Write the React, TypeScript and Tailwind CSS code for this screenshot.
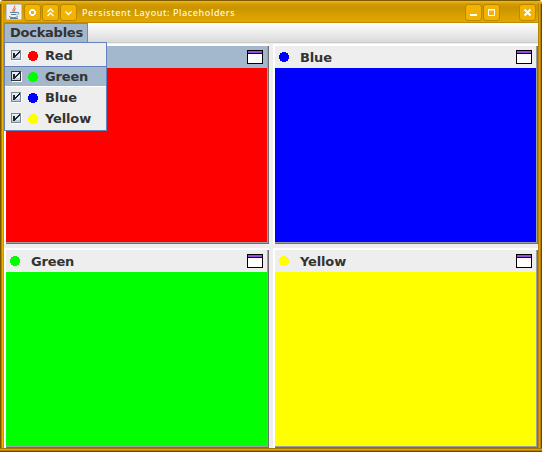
import React from 'react';

function Dot({ color }: { color: string }) {
  return (
    <svg className="block shrink-0" width="10" height="10" viewBox="0 0 10 10" shapeRendering="crispEdges">
      <path fill={color} d="M3 0h4v1h2v2h1v4h-1v2H7v1H3V9H1V7H0V3h1V1h2z" />
    </svg>
  );
}

function MaximizeIcon() {
  return (
    <svg className="block" width="16" height="14" shapeRendering="crispEdges">
      <path fill="#000" d="M0 0h16v14H0z" />
      <path fill="#a045e6" d="M1 1h14v2H1z" />
      <path fill="#fff" d="M1 4h14v9H1z" />
    </svg>
  );
}

function Check({ dark }: { dark: boolean }) {
  return (
    <svg className="block shrink-0" width="11" height="11" shapeRendering="crispEdges">
      <path fill="#fff" d="M1 1h10v10H1z" />
      <path fill={dark ? '#333333' : '#7a8a99'} d="M0 0h10v10H0z" />
      <path fill="#e4edf5" d="M1 1h8v8H1z" />
      <path fill="#b8cfe5" d="M1 7h8v2H1z" />
      <path fill="#222" d="M2 3h2v2h1v-1h1v-1h1v-1h1v-1h1v2h-1v1h-1v1h-1v1h-1v1h-1v1h-2z" />
    </svg>
  );
}

function Panel({ name, color, active = false }: { name?: string; color: string; active?: boolean }) {
  return (
    <div className="flex h-[200px] w-[265px] flex-col border-t-2 border-l-2 border-white">
      <div className="flex grow flex-col border-r border-b border-[#6f6f6f]">
        <div className="flex grow flex-col border-r border-b border-[#a0a0a0]">
          <div className={`flex h-[22px] items-center pr-[4px] pl-1 ${active ? 'bg-[#a3b8cc]' : 'bg-[#eeeeee]'}`}>
            <Dot color={color} />
            <span className="ml-[11px] grow pt-px text-[13px] leading-[22px] tracking-[-0.15px]">{name}</span>
            <MaximizeIcon />
          </div>
          <div className="grow" style={{ backgroundColor: color }} />
        </div>
      </div>
    </div>
  );
}

function TitleButton({ children }: { children: React.ReactNode }) {
  return (
    <div className="h-[17px] w-[17px] rounded-[3px] border border-[#b98700] bg-[#f2b400]">
      <svg className="block" width="15" height="15" viewBox="0 0 15 15" fill="none" stroke="#fff">
        {children}
      </svg>
    </div>
  );
}

function JavaIcon() {
  return (
    <svg className="block" width="16" height="16" viewBox="0 0 16 16" fill="none">
      <rect x=".5" y=".5" width="15" height="15" rx="1" fill="#eef0f2" stroke="#bfc8d0" />
      <path d="M8.5 1.5C10 4 5 5 7.5 8M10 4.5C8 5.5 8 6.5 9 7.5" stroke="#ee8058" strokeWidth="1.2" />
      <path d="M4 8.5h7M5 10.5h5M11 8.5c3-.5 2 2-.5 2.5M3 12.5c2 1.5 7 1.5 9 0M4 14.5h8" stroke="#55809d" />
    </svg>
  );
}

const items = [
  ['Red', '#ff0000'],
  ['Green', '#00ff00'],
  ['Blue', '#0000ff'],
  ['Yellow', '#ffff00'],
];

export default function App() {
  return (
    <div className="relative flex h-[452px] w-[542px] flex-col overflow-hidden rounded-t-[4px] bg-[#dca000] px-1 font-['DejaVu_Sans',sans-serif] font-bold text-[#333333]">
      <div className="-mx-1 flex h-[23px] shrink-0 items-start bg-[linear-gradient(#7d5900_0px,#7d5900_1px,#efb91c_1px,#d49b00_4px,#c99400_8px,#dda400_18px,#dfa500_22px,#c18a00_22px)] pt-1 pl-1.5">
        <div className="w-[18px]"><JavaIcon /></div>
        <div className="flex gap-px">
          <TitleButton>
            <path d="M6 4h3v1h1v1h1v3h-1v1H9v1H6v-1H5V9H4V6h1V5h1zM6 6v3h3V6z" fill="#fff" fillRule="evenodd" stroke="none" />
          </TitleButton>
          <TitleButton><path d="M4.5 7l3-3 3 3M4.5 11l3-3 3 3" strokeWidth="1.3" /></TitleButton>
          <TitleButton><path d="M4.5 6.5l3 3 3-3" strokeWidth="1.3" /></TitleButton>
        </div>
        <span className="ml-[5px] grow font-['Noto_Sans',sans-serif] text-[9px] leading-[17px] font-medium tracking-[0.59px] whitespace-nowrap text-[#fff8df]">
          Persistent Layout: Placeholders
        </span>
        <div className="mr-[6px] flex gap-px">
          <TitleButton><path d="M4 10h7" strokeWidth="2" /></TitleButton>
          <TitleButton><path d="M4.5 4.5h6v6h-6zM4 5h7" /></TitleButton>
          <div className="ml-[18px]"><TitleButton><path d="M4.5 4.5l6 6M10.5 4.5l-6 6" strokeWidth="2" /></TitleButton></div>
        </div>
      </div>

      <div className="flex h-[21px] shrink-0 items-start border-b border-[#eeeeee] bg-[linear-gradient(#ffffff_0px,#dadada_19px,#cccccc_19px)]">
        <div className="h-5 w-[84px] border-t border-r border-l border-t-[#7a8a99] border-r-[#7a8a99] border-l-[#7a8a99] bg-[#a3b8cc] pl-[5px] text-[13px] leading-[18px] tracking-[-0.25px]">
          Dockables
        </div>
      </div>

      <div className="grid h-[404px] shrink-0 grid-cols-[265px_265px] grid-rows-[200px_200px] gap-1 bg-[#eeeeee]">
        <Panel color="#ff0000" active />
        <Panel name="Blue" color="#0000ff" />
        <Panel name="Green" color="#00ff00" />
        <Panel name="Yellow" color="#ffff00" />
      </div>
      <div className="h-1 shrink-0" />

      <div className="absolute top-[42px] left-1 h-[89px] w-[103px] border border-[#6382bf] bg-[#eeeeee] pt-0.5">
        {items.map(([name, color]) => (
          <div
            key={name}
            className={`flex h-[21px] items-center border-t border-b pl-[6px] text-[13px] leading-[19px] tracking-[-0.15px] ${
              name === 'Green' ? 'border-t-[#6382bf] border-b-white bg-[#a3b8cc]' : 'border-transparent'
            }`}
          >
            <Check dark={name === 'Green'} />
            <span className="ml-[6px]"><Dot color={color} /></span>
            <span className="ml-[7px]">{name}</span>
          </div>
        ))}
      </div>

      <div className="pointer-events-none absolute top-[4px] bottom-0 left-0 w-1 bg-[linear-gradient(90deg,#795600_1px,#b88000_1px,#b88000_2px,#f0b000_2px,#f0b000_3px,#cc9400_3px)]" />
      <div className="pointer-events-none absolute top-[4px] right-0 bottom-0 w-1 bg-[linear-gradient(90deg,#b88300_1px,#dda400_1px,#dda400_2px,#b88000_2px,#b88000_3px,#684900_3px)]" />
      <div className="pointer-events-none absolute right-0 bottom-0 left-0 h-1 bg-[linear-gradient(#a87700_1px,#dda400_1px,#dda400_2px,#b88000_2px,#b88000_3px,#684900_3px)]" />
    </div>
  );
}
